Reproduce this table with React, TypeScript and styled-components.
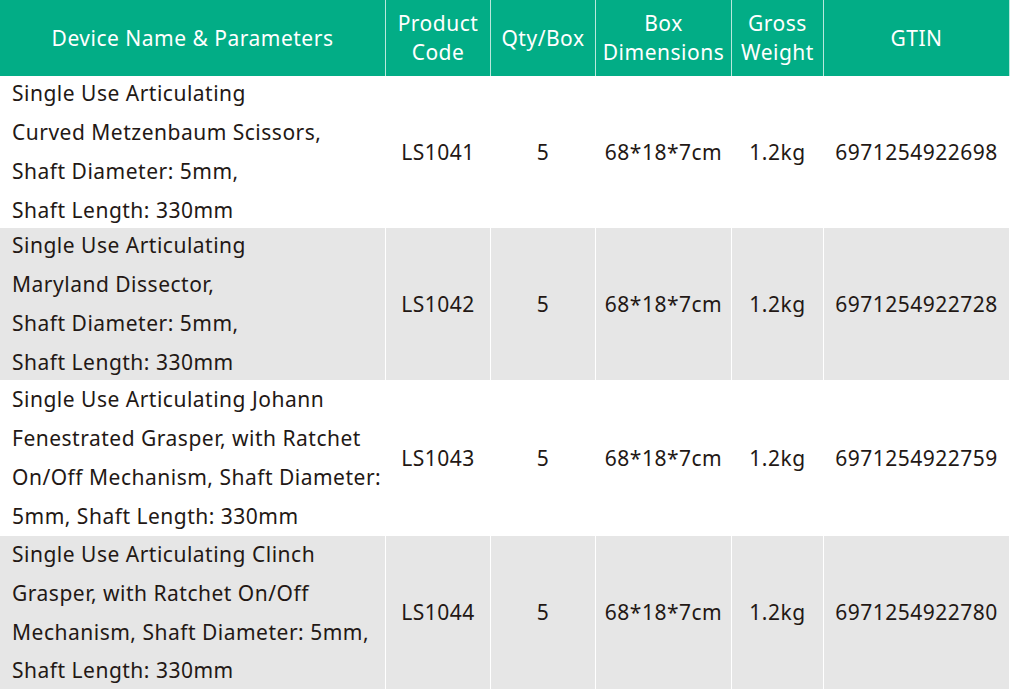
import React from "react";
import styled, { createGlobalStyle } from "styled-components";

const Global = createGlobalStyle`
  html, body { margin: 0; padding: 0; background: #ffffff; }
  body { font-family: "Noto Sans", "Open Sans", sans-serif; }
`;

const COLS = "385px 104px 104px 135px 91px 185px";

const Sheet = styled.div`
  width: 1010px;
  display: flex;
  flex-direction: column;
  font-family: "Noto Sans", "Open Sans", sans-serif;
  font-size: 21px;
  letter-spacing: 0.5px;
`;

const HeadRow = styled.div`
  display: grid;
  grid-template-columns: ${COLS};
  column-gap: 1px;
  height: 76px;
  background: #b8e8dc;
  padding-right: 1px;
`;

const HeadCell = styled.div`
  background: #02ad86;
  color: #ffffff;
  line-height: 29px;
  display: flex;
  align-items: center;
  justify-content: center;
  text-align: center;
`;

const Row = styled.div<{ $h: number }>`
  display: grid;
  grid-template-columns: ${COLS};
  column-gap: 1px;
  height: ${(p) => p.$h}px;
  background: #ffffff;
`;

const Cell = styled.div<{ $shade: boolean; $left?: boolean }>`
  background: ${(p) => (p.$shade ? "#e6e6e6" : "#ffffff")};
  color: #231815;
  line-height: 38.9px;
  display: flex;
  align-items: center;
  justify-content: ${(p) => (p.$left ? "flex-start" : "center")};
  padding: ${(p) => (p.$left ? "0 0 0 12px" : "0")};
  white-space: nowrap;
  overflow: visible;
  min-height: 0;
`;

const NameLines = styled.div`
  display: flex;
  flex-direction: column;
`;

const rows = [
  {
    name: ["Single Use Articulating", "Curved Metzenbaum Scissors,", "Shaft Diameter: 5mm,", "Shaft Length: 330mm"],
    code: "LS1041",
    gtin: "6971254922698",
    h: 152,
  },
  {
    name: ["Single Use Articulating", "Maryland Dissector,", "Shaft Diameter: 5mm,", "Shaft Length: 330mm"],
    code: "LS1042",
    gtin: "6971254922728",
    h: 152,
  },
  {
    name: ["Single Use Articulating Johann", "Fenestrated Grasper, with Ratchet", "On/Off Mechanism, Shaft Diameter:", "5mm, Shaft Length: 330mm"],
    code: "LS1043",
    gtin: "6971254922759",
    h: 156,
  },
  {
    name: ["Single Use Articulating Clinch", "Grasper, with Ratchet On/Off", "Mechanism, Shaft Diameter: 5mm,", "Shaft Length: 330mm"],
    code: "LS1044",
    gtin: "6971254922780",
    h: 153,
  },
];

export default function App() {
  return (
    <>
      <Global />
      <Sheet>
        <HeadRow>
          <HeadCell>Device Name &amp; Parameters</HeadCell>
          <HeadCell>Product<br />Code</HeadCell>
          <HeadCell>Qty/Box</HeadCell>
          <HeadCell>Box<br />Dimensions</HeadCell>
          <HeadCell>Gross<br />Weight</HeadCell>
          <HeadCell>GTIN</HeadCell>
        </HeadRow>
        {rows.map((r, i) => {
          const shade = i % 2 === 1;
          return (
            <Row key={r.code} $h={r.h}>
              <Cell $shade={shade} $left>
                <NameLines>
                  {r.name.map((l, j) => (
                    <span key={j}>{l}</span>
                  ))}
                </NameLines>
              </Cell>
              <Cell $shade={shade}>{r.code}</Cell>
              <Cell $shade={shade}>5</Cell>
              <Cell $shade={shade}>68*18*7cm</Cell>
              <Cell $shade={shade}>1.2kg</Cell>
              <Cell $shade={shade}>{r.gtin}</Cell>
            </Row>
          );
        })}
      </Sheet>
    </>
  );
}
